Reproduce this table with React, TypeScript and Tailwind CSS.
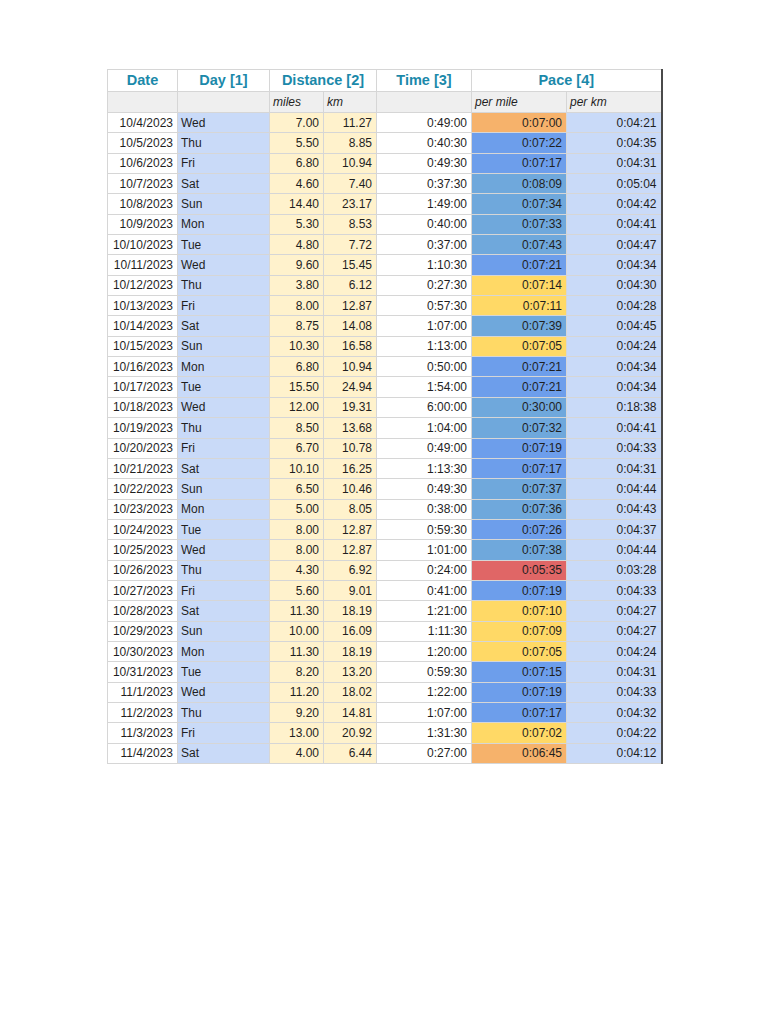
type Run = [string, string, string, string, string, string, string];

const runs: Run[] = [
  ["10/4/2023", "Wed", "7.00", "11.27", "0:49:00", "0:07:00", "0:04:21"],
  ["10/5/2023", "Thu", "5.50", "8.85", "0:40:30", "0:07:22", "0:04:35"],
  ["10/6/2023", "Fri", "6.80", "10.94", "0:49:30", "0:07:17", "0:04:31"],
  ["10/7/2023", "Sat", "4.60", "7.40", "0:37:30", "0:08:09", "0:05:04"],
  ["10/8/2023", "Sun", "14.40", "23.17", "1:49:00", "0:07:34", "0:04:42"],
  ["10/9/2023", "Mon", "5.30", "8.53", "0:40:00", "0:07:33", "0:04:41"],
  ["10/10/2023", "Tue", "4.80", "7.72", "0:37:00", "0:07:43", "0:04:47"],
  ["10/11/2023", "Wed", "9.60", "15.45", "1:10:30", "0:07:21", "0:04:34"],
  ["10/12/2023", "Thu", "3.80", "6.12", "0:27:30", "0:07:14", "0:04:30"],
  ["10/13/2023", "Fri", "8.00", "12.87", "0:57:30", "0:07:11", "0:04:28"],
  ["10/14/2023", "Sat", "8.75", "14.08", "1:07:00", "0:07:39", "0:04:45"],
  ["10/15/2023", "Sun", "10.30", "16.58", "1:13:00", "0:07:05", "0:04:24"],
  ["10/16/2023", "Mon", "6.80", "10.94", "0:50:00", "0:07:21", "0:04:34"],
  ["10/17/2023", "Tue", "15.50", "24.94", "1:54:00", "0:07:21", "0:04:34"],
  ["10/18/2023", "Wed", "12.00", "19.31", "6:00:00", "0:30:00", "0:18:38"],
  ["10/19/2023", "Thu", "8.50", "13.68", "1:04:00", "0:07:32", "0:04:41"],
  ["10/20/2023", "Fri", "6.70", "10.78", "0:49:00", "0:07:19", "0:04:33"],
  ["10/21/2023", "Sat", "10.10", "16.25", "1:13:30", "0:07:17", "0:04:31"],
  ["10/22/2023", "Sun", "6.50", "10.46", "0:49:30", "0:07:37", "0:04:44"],
  ["10/23/2023", "Mon", "5.00", "8.05", "0:38:00", "0:07:36", "0:04:43"],
  ["10/24/2023", "Tue", "8.00", "12.87", "0:59:30", "0:07:26", "0:04:37"],
  ["10/25/2023", "Wed", "8.00", "12.87", "1:01:00", "0:07:38", "0:04:44"],
  ["10/26/2023", "Thu", "4.30", "6.92", "0:24:00", "0:05:35", "0:03:28"],
  ["10/27/2023", "Fri", "5.60", "9.01", "0:41:00", "0:07:19", "0:04:33"],
  ["10/28/2023", "Sat", "11.30", "18.19", "1:21:00", "0:07:10", "0:04:27"],
  ["10/29/2023", "Sun", "10.00", "16.09", "1:11:30", "0:07:09", "0:04:27"],
  ["10/30/2023", "Mon", "11.30", "18.19", "1:20:00", "0:07:05", "0:04:24"],
  ["10/31/2023", "Tue", "8.20", "13.20", "0:59:30", "0:07:15", "0:04:31"],
  ["11/1/2023", "Wed", "11.20", "18.02", "1:22:00", "0:07:19", "0:04:33"],
  ["11/2/2023", "Thu", "9.20", "14.81", "1:07:00", "0:07:17", "0:04:32"],
  ["11/3/2023", "Fri", "13.00", "20.92", "1:31:30", "0:07:02", "0:04:22"],
  ["11/4/2023", "Sat", "4.00", "6.44", "0:27:00", "0:06:45", "0:04:12"],
];

// conditional colour on pace per mile
function paceBg(p: string) {
  const [h, m, s] = p.split(":").map(Number);
  const secs = h * 3600 + m * 60 + s;
  if (secs < 360) return "bg-[#e06666]";
  if (secs <= 420) return "bg-[#f6b26b]";
  if (secs < 435) return "bg-[#ffd966]";
  if (secs < 450) return "bg-[#6d9eeb]";
  return "bg-[#6fa8dc]";
}

const cell = "border-b border-r border-[#d6d6d6] px-[4px] py-0 leading-none";
const thick = "border-l border-l-[#1a1a1a]";

export default function App() {
  return (
    <div className="min-h-[1024px] w-[768px] bg-white pt-[69px] pl-[107px] font-['Liberation_Sans',Arial,sans-serif] text-[12px] text-[#1f1f1f]">
      <table className="table-fixed border-collapse border-l border-t border-[#d6d6d6]">
        <colgroup>
          <col className="w-[70px]" />
          <col className="w-[92px]" />
          <col className="w-[54px]" />
          <col className="w-[53px]" />
          <col className="w-[95px]" />
          <col className="w-[95px]" />
          <col className="w-[95px]" />
        </colgroup>
        <thead>
          <tr className="h-[22px] text-[14.5px] font-bold text-[#1b89aa]">
            <th className={`${cell} text-center`}>Date</th>
            <th className={`${cell} text-center`}>Day [1]</th>
            <th colSpan={2} className={`${cell} ${thick} text-center`}>
              Distance [2]
            </th>
            <th className={`${cell} ${thick} text-center`}>Time [3]</th>
            <th colSpan={2} className={`${cell} ${thick} border-r-2 border-r-[#4a4a4a] text-center`}>
              Pace [4]
            </th>
          </tr>
          <tr className="h-[21px] bg-[#efefef] text-left text-[12px] font-normal italic">
            <th className={cell}></th>
            <th className={cell}></th>
            <th className={`${cell} ${thick} pl-[3px] font-normal`}>miles</th>
            <th className={`${cell} pl-[3px] font-normal`}>km</th>
            <th className={`${cell} ${thick}`}></th>
            <th className={`${cell} ${thick} pl-[3px] font-normal`}>per mile</th>
            <th className={`${cell} border-r-2 border-r-[#4a4a4a] pl-[3px] font-normal`}>per km</th>
          </tr>
        </thead>
        <tbody>
          {runs.map((r) => (
            <tr key={r[0]} className="h-[20.35px]">
              <td className={`${cell} text-right`}>{r[0]}</td>
              <td className={`${cell} bg-[#c9daf8] pl-[3px] text-left`}>{r[1]}</td>
              <td className={`${cell} ${thick} bg-[#fff2cc] text-right`}>{r[2]}</td>
              <td className={`${cell} bg-[#fff2cc] text-right`}>{r[3]}</td>
              <td className={`${cell} ${thick} text-right`}>{r[4]}</td>
              <td className={`${cell} ${thick} ${paceBg(r[5])} text-right`}>{r[5]}</td>
              <td className={`${cell} border-r-2 border-r-[#4a4a4a] bg-[#c9daf8] text-right`}>{r[6]}</td>
            </tr>
          ))}
        </tbody>
      </table>
    </div>
  );
}
